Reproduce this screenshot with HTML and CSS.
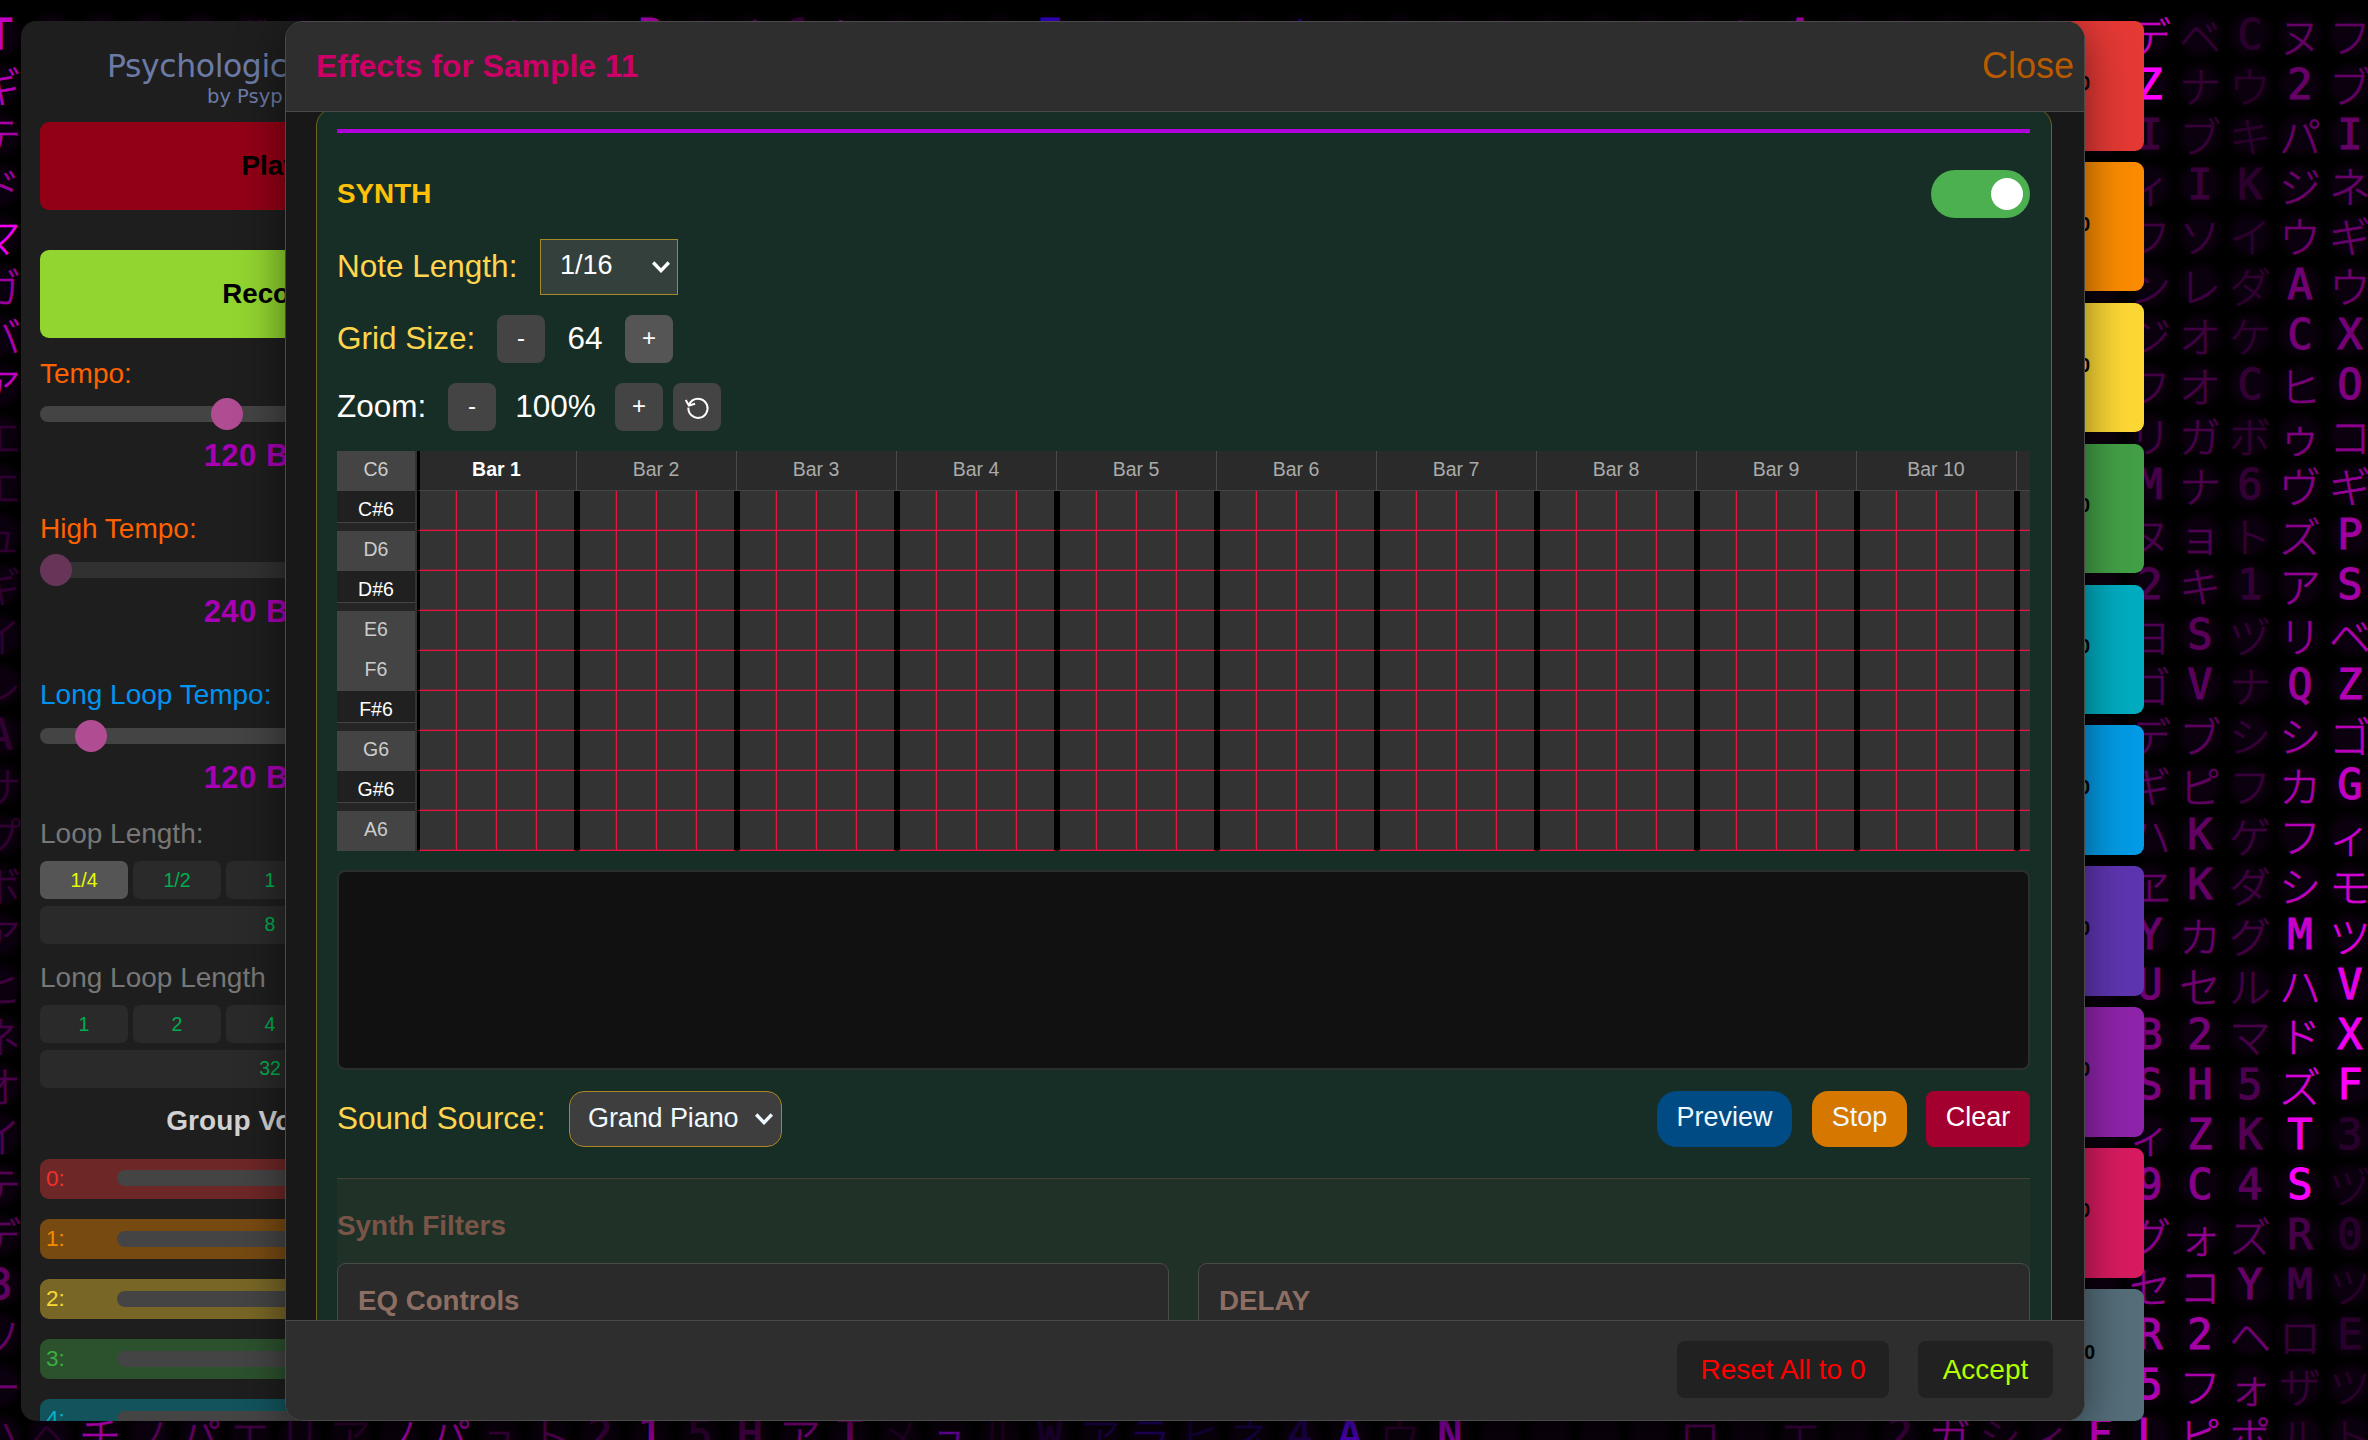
FILE: index.html
```html
<!DOCTYPE html>
<html lang="en">
<head>
<meta charset="utf-8">
<title>Effects for Sample 11</title>
<link rel="stylesheet" href="styles.css">
</head>
<body>
<div class="rain" id="rain" aria-hidden="true"></div>

<div class="app">
  <aside class="panel">
    <div class="brand">Psychologic</div>
    <div class="byline">by Psyp</div>
    <div class="big-btn play">Play</div>
    <div class="big-btn record">Record</div>

    <div class="label orange t1">Tempo:</div>
    <div class="slider s1"><i class="thumb" style="left:171px"></i></div>
    <div class="value">120 BPM</div>

    <div class="label orange t2">High Tempo:</div>
    <div class="slider dim"><i class="thumb" style="left:0px"></i></div>
    <div class="value">240 BPM</div>

    <div class="label blue t3">Long Loop Tempo:</div>
    <div class="slider"><i class="thumb" style="left:35px"></i></div>
    <div class="value">120 BPM</div>

    <div class="label gray t4">Loop Length:</div>
    <div class="lengths">
      <span class="on">1/4</span><span>1/2</span><span>1</span><span>2</span><span>4</span>
      <span class="wide">8</span>
    </div>
    <div class="label gray t5">Long Loop Length</div>
    <div class="lengths">
      <span>1</span><span>2</span><span>4</span><span>8</span><span>16</span>
      <span class="wide">32</span>
    </div>

    <div class="group-title">Group Volumes</div>
    <div class="volumes">
      <div class="vol v0"><b>0:</b><i></i></div>
      <div class="vol v1"><b>1:</b><i></i></div>
      <div class="vol v2"><b>2:</b><i></i></div>
      <div class="vol v3"><b>3:</b><i></i></div>
      <div class="vol v4"><b>4:</b><i></i></div>
    </div>
  </aside>

  <main class="pads">
    <div class="pad p0">0</div><div class="pad p1">0</div><div class="pad p2">0</div>
    <div class="pad p3">0</div><div class="pad p4">0</div><div class="pad p5">0</div>
    <div class="pad p6">0</div><div class="pad p7">0</div><div class="pad p8">0</div>
    <div class="pad p9">0</div>
  </main>
</div>

<div class="modal">
  <header class="modal-head">
    <h2>Effects for Sample 11</h2>
    <span class="close">Close</span>
  </header>

  <div class="modal-body">
    <section class="synth">
      <div class="rule"></div>
      <div class="row synth-head">
        <h3>SYNTH</h3>
        <div class="toggle"><i></i></div>
      </div>
      <div class="row note-row">
        <span class="lab">Note Length:</span>
        <div class="select square"><span>1/16</span>
          <svg width="18" height="12" viewBox="0 0 18 12"><path d="M1.2 1.5 9 9.6l7.8-8.1" fill="none" stroke="#fff" stroke-width="3.4"/></svg>
        </div>
      </div>
      <div class="row grid-row">
        <span class="lab">Grid Size:</span>
        <span class="step">-</span><span class="num">64</span><span class="step hot">+</span>
      </div>
      <div class="row zoom-row">
        <span class="lab white">Zoom:</span>
        <span class="step">-</span><span class="num">100%</span><span class="step">+</span>
        <span class="step reset"><svg width="26" height="26" viewBox="0 0 26 26" fill="none" stroke="#fff" stroke-width="2"><path d="M4.400 13.600a9.600 9.600 0 1 0 4.400-7.400C6.800 7.500 5.600 9 5.100 11.200"/><path d="M1.700 6 4.900 11.500 11.100 9.700"/></svg></span>
      </div>

      <div class="roll">
        <div class="keys">
          <span>C6</span><span class="sharp">C#6</span><span>D6</span><span class="sharp">D#6</span><span>E6</span>
          <span>F6</span><span class="sharp">F#6</span><span>G6</span><span class="sharp">G#6</span><span>A6</span>
        </div>
        <div class="lanes">
          <div class="bars" id="bars"></div>
          <div class="cells" id="cells"></div>
        </div>
      </div>

      <div class="scope"></div>

      <div class="row source-row">
        <span class="lab">Sound Source:</span>
        <div class="select round"><span>Grand Piano</span>
          <svg width="18" height="12" viewBox="0 0 18 12"><path d="M1.2 1.500 9 9.600l7.800-8.100" fill="none" stroke="#f0f8ff" stroke-width="3.4"/></svg>
        </div>
        <div class="actions">
          <span class="act preview">Preview</span>
          <span class="act stop">Stop</span>
          <span class="act clear">Clear</span>
        </div>
      </div>

      <div class="filters">
        <h3>Synth Filters</h3>
        <div class="cards">
          <div class="card">EQ Controls</div>
          <div class="card">DELAY</div>
        </div>
      </div>
    </section>
  </div>

  <footer class="modal-foot">
    <span class="fbtn danger">Reset All to 0</span>
    <span class="fbtn ok">Accept</span>
  </footer>
</div>
<script src="app.js"></script>
</body>
</html>
```
FILE: styles.css
```css
* { box-sizing: border-box; }
body {
  margin: 0;
  width: 2368px;
  height: 1440px;
  overflow: hidden;
  position: relative;
  background: #000;
  color: #fff;
  font-family: "Liberation Sans", Arial, sans-serif;
  font-size: 27px;
}
h2, h3 { margin: 0; }

/* falling glyphs */
.rain {
  position: absolute;
  left: -25px;
  top: 0;
  display: flex;
  font-family: "DejaVu Sans Mono", "Noto Sans CJK JP", monospace;
  font-size: 42px;
}
.col { width: 50px; flex: none; padding-top: 10px; }
.col span {
  display: flex;
  justify-content: center;
  height: 50px;
  line-height: 50px;
  white-space: nowrap;
  background: radial-gradient(closest-side, #0b000d 60%, transparent);
}
.col em { font-style: normal; -webkit-text-stroke: 1px currentColor; }
.col .kana { font-family: "Noto Sans CJK JP", sans-serif; font-weight: 300; -webkit-text-stroke: .5px currentColor; }

/* page behind the dialog */
.app {
  position: relative;
  display: flex;
  gap: 11px;
  width: 2144px;
  height: 1421px;
  padding: 21px 0 0 21px;
}
.panel {
  width: 498px;
  flex: none;
  padding: 26px 19px 0;
  background: #1e1e1e;
  border-radius: 15px;
  overflow: hidden;
}
.brand, .byline { font-family: "DejaVu Sans", sans-serif; color: #6c7ba6; white-space: nowrap; }
.brand { font-size: 31.500px; line-height: 38px; padding-left: 67px; letter-spacing: -.4px; }
.byline { font-size: 19.500px; line-height: 24px; padding-left: 167px; }
.big-btn {
  height: 88px;
  line-height: 87px;
  border-radius: 9px;
  text-align: center;
  font-weight: 700;
  font-size: 27.700px;
  color: #000;
}
.play { margin-top: 13px; background: #920016; }
.record { margin-top: 40px; background: #92d530; }
.label { line-height: 30px; font-size: 28px; }
.orange { color: #ff6200; }
.blue { color: #0094f0; }
.gray { color: #777; }
.t1 { margin-top: 21px; }
.t2 { margin-top: 41px; }
.t3 { margin-top: 51px; }
.t4 { margin-top: 24px; margin-bottom: 12px; }
.t5 { margin-top: 19px; margin-bottom: 12px; }
.slider { position: relative; height: 16px; margin: 18px 0 17px; border-radius: 8px; background: #444; }
.slider.s1 { margin-top: 17px; }
.slider.dim { opacity: .5; }
.thumb { position: absolute; top: -8px; width: 32px; height: 32px; border-radius: 50%; background: #b04c92; }
.value { line-height: 34px; text-align: center; font-weight: 700; font-size: 31px; color: #a800b4; letter-spacing: .5px; }
.lengths { display: grid; grid-template-columns: repeat(5, 88px); gap: 7px 5px; }
.lengths span {
  height: 38px;
  line-height: 38px;
  text-align: center;
  font-size: 19.500px;
  border-radius: 7px;
  background: #2a2a2a;
  color: #00ad50;
}
.lengths .on { background: #555; color: #e6fb00; }
.lengths .wide { grid-column: 1 / -1; line-height: 36px; }
.group-title { margin: 18px 0 22.500px; line-height: 30px; text-align: center; font-weight: 700; font-size: 28px; letter-spacing: .1px; color: #d2d2d2; }
.volumes { display: grid; gap: 20px; }
.vol { display: flex; align-items: center; height: 40px; padding: 0 6px; border-radius: 9px; }
.vol b { width: 71px; font-weight: 400; font-size: 22.500px; }
.vol i { flex: 1; height: 16px; border-radius: 8px; background: #444; }
.v0 { background: #6d2726; color: #f3302c; }
.v0 i { margin-top: -2px; }
.v1 { background: #774a12; color: #f88b00; }
.v2 { background: #786626; color: #f8d838; }
.v3 { background: #2c512d; color: #3cae40; }
.v4 { background: #12535c; color: #00b4cc; }

.pads { flex: 1; display: grid; grid-template-rows: repeat(9, 129.500px) 1fr; gap: 11.400px; }
.pad {
  display: flex;
  align-items: center;
  justify-content: flex-end;
  padding: 0 54px 5px 0;
  border-radius: 9px;
  font-size: 19.500px;
  font-weight: 700;
  color: #000;
}
.p0 { background: #e53935; } .p1 { background: #fb8c00; } .p2 { background: #fdd835; }
.p3 { background: #43a047; } .p4 { background: #00acc1; } .p5 { background: #039be5; }
.p6 { background: #5e35b1; } .p7 { background: #8e24aa; } .p8 { background: #d81b60; }
.p9 { background: #546e7a; padding-right: 49px; }

/* dialog */
.modal {
  position: absolute;
  left: 285px;
  top: 21px;
  width: 1800px;
  height: 1400px;
  display: flex;
  flex-direction: column;
  background: #181818;
  border: 1px solid #4a4a4a;
  border-radius: 18px;
  overflow: hidden;
  box-shadow: 0 8px 45px rgba(0, 0, 0, .5);
}
.modal-head {
  flex: none;
  height: 90px;
  display: flex;
  justify-content: space-between;
  align-items: center;
  padding: 0 10px 2px 30px;
  background: #2e2e2e;
  border-bottom: 1px solid #4a4a4a;
}
.modal-head h2 { font-size: 31.900px; color: #cc0067; padding-top: 2px; }
.close { font-size: 36px; color: #b85a00; }
.modal-body { flex: 1; min-height: 0; overflow: hidden; }
.modal-foot {
  flex: none;
  height: 100px;
  display: flex;
  justify-content: flex-end;
  gap: 29px;
  padding: 20px 31px 0 0;
  background: #2e2e2e;
  border-top: 1px solid #4a4a4a;
  font-size: 28px;
}
.fbtn { height: 57px; line-height: 57px; border-radius: 8px; background: #212121; text-align: center; }
.danger { width: 212px; color: #f00; }
.ok { width: 135px; color: #b2ff00; }

.synth {
  margin: -4px 32px 0 30px;
  height: 1300px;
  padding: 20px 21px 0 20px;
  background: #172e26;
  border: 1px solid #6e651c;
  border-radius: 18px;
}
.rule { height: 4px; background: #b000dc; }
.row { display: flex; align-items: center; }
.synth-head { height: 48px; margin-top: 37px; justify-content: space-between; }
.synth-head h3 { font-size: 27.800px; color: #ffc107; }
.toggle { width: 99px; height: 48px; border-radius: 24px; background: #4caf50; display: flex; justify-content: flex-end; padding: 8px 7px; }
.toggle i { width: 32px; height: 32px; border-radius: 50%; background: #fff; }
.lab { font-size: 31.500px; color: #ffd54f; white-space: nowrap; padding-bottom: 1px; }
.lab.white { color: #fff; }
.note-row { height: 56px; margin-top: 21px; }
.note-row .lab { width: 203px; }
.select { height: 56px; display: flex; align-items: center; justify-content: space-between; border: 1px solid #a58a28; }
.select.square { width: 138px; padding: 0 7px 0 19px; background: #34403b; }
.select.square span { padding-bottom: 3px; }
.select.round { width: 213px; padding: 0 8px 0 18px; background: #3e3e3e; border-radius: 15px; border-color: #ac8522; color: #f0f8ff; }
.select.round span { padding-bottom: 2px; letter-spacing: -.1px; }
.grid-row { height: 48px; margin-top: 20px; }
.grid-row .lab { width: 160px; }
.zoom-row { height: 48px; margin-top: 20px; }
.zoom-row .lab { width: 111px; }
.step { width: 48px; height: 48px; border-radius: 8px; background: #444; font-size: 24px; line-height: 45px; text-align: center; }
.step.hot { background: #555; }
.step.reset { margin-left: 10px; display: flex; align-items: center; justify-content: center; }
.num { font-size: 31.500px; width: 80px; text-align: center; padding-bottom: 1px; }
.zoom-row .num { width: 119px; }

.roll { display: flex; height: 400px; margin-top: 20px; font-size: 19.500px; }
.keys { width: 80px; flex: none; border-right: 2px solid #333; }
.keys span { display: block; height: 40px; line-height: 37px; text-align: center; background: #444; color: #ccc; }
.keys .sharp { color: #fff; background: linear-gradient(#202020 31px, #444 31px, #444 32px, #252525 32px); }
.lanes { flex: 1; min-width: 0; overflow: hidden; background: #333; }
.bars { display: flex; width: 1760px; height: 40px; border-left: 3px solid #000; border-bottom: 1px solid #444; background: #2a2a2a; }
.bars span { width: 160px; flex: none; border-right: 1px solid #4a4a4a; padding-right: 1px; text-align: center; line-height: 37px; color: #aaa; }
.bars span:first-child { width: 157px; color: #fff; font-weight: 700; padding-right: 3px; }
.cells { display: grid; grid-template-columns: repeat(44, 40px); grid-auto-rows: 40px; width: 1760px; }
.cells i { border-right: 1px solid #e81440; border-bottom: 1px solid #e81440; box-shadow: inset -1px -1px #702438; }
.cells i:nth-child(4n) { border-right: 3px solid #000; box-shadow: inset 0 -1px #702438; }
.cells i:nth-child(4n+1) { border-left: 3px solid #000; }

.scope { height: 200px; margin-top: 19px; background: #111; border: 2px solid #2b2f2d; border-radius: 8px; }
.source-row { height: 56px; margin-top: 21px; }
.source-row .lab { width: 232px; }
.actions { margin-left: auto; display: flex; }
.act { height: 56px; line-height: 52px; text-align: center; }
.preview { width: 135px; border-radius: 20px; background: #004b84; color: #f0f8ff; }
.stop { width: 95px; margin: 0 19px 0 20px; border-radius: 16px; background: #d67700; color: #f0f8ff; }
.clear { width: 104px; border-radius: 8px; background: #a30030; }

.filters { margin-top: 31px; padding-top: 32px; height: 300px; background: #203228; border-top: 1px solid #463f33; }
.filters h3 { font-size: 27.900px; line-height: 30px; color: #795548; }
.cards { display: grid; grid-template-columns: 1fr 1fr; gap: 29px; margin-top: 22px; }
.card { height: 200px; padding: 22px 20px; line-height: 30px; font-size: 27.700px; font-weight: 700; color: #8d6e63; background: #2a2a2a; border: 1px solid #4a4a4a; border-radius: 9px; }
```
FILE: app.js
```js
// Glyph columns, 50px apart; each entry lists glyphs top to bottom and brightness stops [row, alpha].
const columns = {
  0: ["TギテドマガバアエエュギイレAサプボアヒネオイテデ3ソーハ", [[0,.75],[3,.6],[4,.95],[5,.6],[7,.75],[8,.14],[16,.16],[19,.22],[27,.4],[28,.3]]],
  43: ["デZIィフンジフリMヌ2ヨゴデギハヱYUBSィ9グセR5L", [[0,.75],[1,1],[2,.2],[10,.25],[15,.3],[20,.45],[25,.55],[28,.75]]],
  44: ["ベナブIソレオオガナョキSVブピKKカセ2HZCォコ2フピ", [[0,.16],[6,.22],[12,.32],[18,.38],[22,.48],[28,.7]]],
  45: ["CウキKイダケCボ6ト1ヅナシフゲダグルマ5K4ズYヘォポ", [[0,.12],[8,.16],[14,.17],[20,.25],[24,.34],[28,.5]]],
  46: ["ヌ2パジウACヒゥヴズアリQシカフシMハドズTSRMロザル", [[0,.36],[5,.42],[9,.5],[14,.62],[18,.78],[21,.85],[23,1],[24,.24],[28,.15]]],
  47: ["フブIネギウXOコギPSベZゴGィモツVXF3ヅ0ツEツト", [[0,.35],[5,.4],[10,.6],[15,.75],[19,.9],[21,1],[22,.12],[28,.12]]]
};
const edge = {
  top: [[1,"テ",.5],[3,"ニ",.1],[5,"ボ",.1],[6,"ノ",.3],[7,"ハ",.9],[8,"ヽ",.3],[10,"ジ",.3],[11,"リ",.7],[12,"ニ",.7],[13,"P",.7],
    [15,"オ",.4],[16,"1",.2],[17,"ヒ",.7],[20,"ラ",.8,"#50f"],[21,"E",.8,"#40f"],[26,"ネ",.5,"#40f"],[31,"テ",.6],[35,"ヒ",.4],[36,"A",.7],[37,"ベ",.5],[39,"ヨ",.2]],
  bottom: [[1,"ヘ",.12],[2,"チ",.6],[3,"ノ",.3],[4,"パ",.35],[5,"エ",.2],[6,"リ",.15],[7,"ア",.15],[8,"ノ",.7],[9,"パ",.65],[10,"ュ",.2],
    [11,"ト",.3],[12,"2",.2],[13,"1",.6],[14,"5",.15],[15,"H",.25],[16,"ア",.5],[17,"T",.4],[18,"メ",.1],[19,"ュ",.65,"#a0f"],[20,"ル",.1],
    [21,"W",.15,"#80f"],[22,"ア",.25,"#50f"],[23,"ラ",.35,"#40f"],[24,"ヒ",.2,"#40f"],[25,"ネ",.25,"#40f"],[26,"4",.25,"#50f"],
    [27,"A",.75,"#60f"],[28,"ウ",.12],[29,"N",.65,"#c0f"],[34,"ロ",.3],[36,"エ",.2],[38,"2",.2],[39,"ガ",.65],[40,"シ",.25],[41,"ィ",.35],[42,"F",.7]]
};
const alphaAt = (stops, row) => {
  let prev = stops[0];
  for (const s of stops) {
    if (s[0] >= row) {
      return s[0] === prev[0] ? s[1] : prev[1] + (s[1] - prev[1]) * (row - prev[0]) / (s[0] - prev[0]);
    }
    prev = s;
  }
  return prev[1];
};
const glyph = (ch, alpha, color = "#f0f") => {
  const cell = document.createElement("span");
  if (ch) {
    const em = document.createElement("em");
    em.textContent = ch;
    em.style.opacity = alpha;
    em.style.color = color;
    if (ch > "\u3000") em.className = "kana";
    cell.append(em);
  }
  return cell;
};
const rain = document.getElementById("rain");
for (let c = 0; c < 48; c++) {
  const col = document.createElement("div");
  col.className = "col";
  const data = columns[c];
  const top = edge.top.find(e => e[0] === c);
  const bottom = edge.bottom.find(e => e[0] === c);
  for (let r = 0; r < 29; r++) {
    if (data) col.append(glyph(data[0][r], alphaAt(data[1], r)));
    else if (r === 0 && top) col.append(glyph(top[1], top[2], top[3]));
    else if (r === 28 && bottom) col.append(glyph(bottom[1], bottom[2], bottom[3]));
    else col.append(glyph(""));
  }
  rain.append(col);
}

// Piano roll header and cells
const bars = document.getElementById("bars");
for (let b = 1; b <= 10; b++) {
  const s = document.createElement("span");
  s.textContent = "Bar " + b;
  bars.append(s);
}
const cells = document.getElementById("cells");
for (let i = 0; i < 9 * 44; i++) cells.append(document.createElement("i"));
```
